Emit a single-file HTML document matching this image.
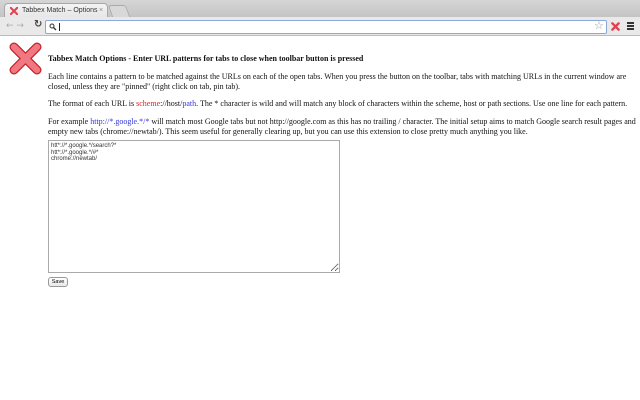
<!DOCTYPE html>
<html><head><meta charset="utf-8"><style>
*{margin:0;padding:0;box-sizing:border-box}
body{width:640px;height:400px;overflow:hidden;background:#fff;font-family:"Liberation Serif",serif;position:relative}
#strip{position:absolute;left:0;top:0;width:640px;height:17px;background:linear-gradient(#d6d6d6,#c4c4c4)}
#tab{position:absolute;left:4px;top:3px;width:104px;height:15px;background:linear-gradient(#f4f4f4,#e6e6e6);border:1px solid #a8a8a8;border-bottom:none;border-radius:4px 4px 0 0;font:7px "Liberation Sans",sans-serif;color:#333;padding:3px 0 0 17px}
#tab2{position:absolute;left:110px;top:5px;width:18px;height:12px;background:#d8d8d8;border:1px solid #aaa;border-bottom:none;border-radius:3px 3px 0 0;transform:skewX(20deg)}
#bar{position:absolute;left:0;top:17px;width:640px;height:19px;background:#e9e9e9;border-bottom:1px solid #bcbcbc}
#omni{position:absolute;left:45px;top:20px;width:562px;height:14px;background:#fff;border:1px solid #8aa9d8;border-radius:2px}
.t{position:absolute;font-size:8px;color:#111;line-height:10px;left:48px;width:590px;white-space:nowrap}
h1{position:absolute;left:48px;top:54px;font-size:8px;font-weight:bold;color:#111}
textarea{position:absolute;left:48px;top:140px;width:292px;height:133px;border:1px solid #aaa;font:6px "Liberation Sans",sans-serif;color:#333;padding:2px;resize:both;line-height:6.5px}
button{position:absolute;left:48px;top:277px;width:20px;height:10px;font:5.5px "Liberation Sans",sans-serif;border:1px solid #999;border-radius:3px;background:linear-gradient(#fff,#e8e8e8)}
.r{color:#e02020}.b{color:#3333dd}
</style></head><body>
<div id="strip"></div>
<div id="tab"><svg style="position:absolute;left:5px;top:3px" width="8" height="8" viewBox="0 0 10 10"><path d="M1 1L9 9M9 1L1 9" stroke="#e04050" stroke-width="2.6" stroke-linecap="round"/></svg>Tabbex Match – Options<span style="position:absolute;left:94px;color:#888">×</span></div>
<div id="tab2"></div>
<div id="bar"></div>
<div style="position:absolute;left:6px;top:21px;font:9px 'DejaVu Sans';color:#aaa">← →</div>
<div style="position:absolute;left:34px;top:19px;font:bold 10px 'DejaVu Sans';color:#444">↻</div>
<div id="omni"><svg style="position:absolute;left:3px;top:2px" width="8" height="8" viewBox="0 0 8 8"><circle cx="3" cy="3" r="2" fill="none" stroke="#333" stroke-width="1"/><path d="M4.5 4.5L7 7" stroke="#333" stroke-width="1.3"/></svg><div style="position:absolute;left:13px;top:2px;width:1px;height:8px;background:#222"></div></div>
<div style="position:absolute;left:594px;top:19px;font:11px 'DejaVu Sans';color:#999">☆</div>
<svg style="position:absolute;left:611px;top:22px" width="9" height="9" viewBox="0 0 10 10"><path d="M1.5 1.5L8.5 8.5M8.5 1.5L1.5 8.5" stroke="#e04050" stroke-width="2.6" stroke-linecap="round"/></svg>
<div style="position:absolute;left:627px;top:22px;width:7px;height:8px;border-top:2px solid #333;border-bottom:2px solid #333"><div style="margin-top:1px;height:2px;background:#333"></div></div>
<svg style="position:absolute;left:9px;top:42px" width="33" height="33" viewBox="0 0 33 33"><path d="M5 5L28 28M28 5L5 28" stroke="#c8202c" stroke-width="9" stroke-linecap="round"/><path d="M5 5L28 28M28 5L5 28" stroke="#f07880" stroke-width="6.5" stroke-linecap="round"/></svg>
<h1>Tabbex Match Options - Enter URL patterns for tabs to close when toolbar button is pressed</h1>
<div class="t" style="top:72px">Each line contains a pattern to be matched against the URLs on each of the open tabs. When you press the button on the toolbar, tabs with matching URLs in the current window are<br>closed, unless they are "pinned" (right click on tab, pin tab).</div>
<div class="t" style="top:99px">The format of each URL is <span class="r">scheme</span>://host/<span class="b">path</span>. The * character is wild and will match any block of characters within the scheme, host or path sections. Use one line for each pattern.</div>
<div class="t" style="top:117px">For example <span class="b">http://*.google.*/*</span> will match most Google tabs but not http://google.com as this has no trailing / character. The initial setup aims to match Google search result pages and<br>empty new tabs (chrome://newtab/). This seem useful for generally clearing up, but you can use this extension to close pretty much anything you like.</div>
<textarea>htt*://*.google.*/search?*
htt*://*.google.*/#*
chrome://newtab/</textarea>
<button>Save</button>
</body></html>
